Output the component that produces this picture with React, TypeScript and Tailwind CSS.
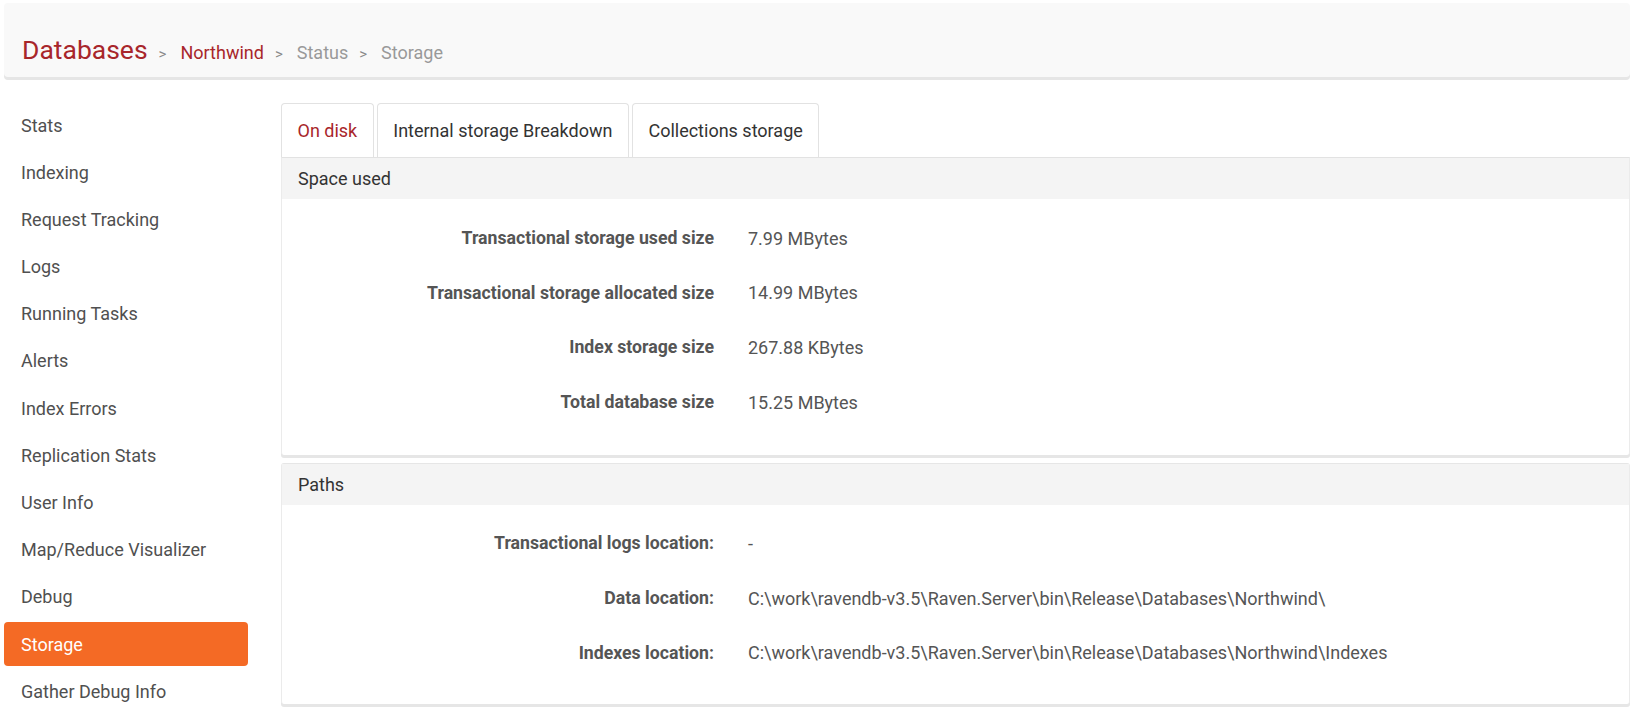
import React from "react";

const menu = [
  "Stats",
  "Indexing",
  "Request Tracking",
  "Logs",
  "Running Tasks",
  "Alerts",
  "Index Errors",
  "Replication Stats",
  "User Info",
  "Map/Reduce Visualizer",
  "Debug",
  "Storage",
  "Gather Debug Info",
];

const spaceUsed = [
  ["Transactional storage used size", "7.99 MBytes"],
  ["Transactional storage allocated size", "14.99 MBytes"],
  ["Index storage size", "267.88 KBytes"],
  ["Total database size", "15.25 MBytes"],
];

const paths = [
  ["Transactional logs location:", "-"],
  ["Data location:", "C:\\work\\ravendb-v3.5\\Raven.Server\\bin\\Release\\Databases\\Northwind\\"],
  ["Indexes location:", "C:\\work\\ravendb-v3.5\\Raven.Server\\bin\\Release\\Databases\\Northwind\\Indexes"],
];

function Sep() {
  return <span className="ml-[11px] mr-[14px] text-[15px] text-[#8a8a8a]">&gt;</span>;
}

function Panel({ title, rows, top }: { title: string; rows: string[][]; top?: boolean }) {
  return (
    <div
      className={`bg-white border-x border-[#ebebeb] rounded-b-[3px] shadow-[0_3px_0_#e6e6e6] ${
        top ? "border-t border-t-[#e2e2e2]" : "border-t border-t-[#e6e6e6] rounded-t-[3px]"
      }`}
    >
      <div className="h-[41px] bg-[#f4f4f4] flex items-center px-[16px] text-[18px] text-[#333]">
        {title}
      </div>
      <div className={top ? "pt-[12px] pb-[26px]" : "pt-[11px] pb-[24px]"}>
        {rows.map(([label, value]) => (
          <div key={label} className="h-[54.6px] flex items-center">
            <div className="w-[432px] text-right font-bold text-[17.7px] text-[#555]">{label}</div>
            <div className="pl-[34px] text-[18px] text-[#555]">{value}</div>
          </div>
        ))}
      </div>
    </div>
  );
}

export default function App() {
  return (
    <div
      className="min-h-screen bg-white px-[4px] pt-[3px]"
      style={{ fontFamily: "Roboto, 'Noto Sans', sans-serif" }}
    >
      <div className="h-[74px] bg-[#f9f9f9] rounded-[4px] shadow-[0_3px_0_#e6e6e6] pl-[18px] pt-[34px]">
        <div className="flex items-baseline leading-none">
          <span className="text-[26.5px] text-[#a8262b]">Databases</span>
          <Sep />
          <span className="text-[18px] text-[#a8262b]">Northwind</span>
          <Sep />
          <span className="text-[18px] text-[#999]">Status</span>
          <Sep />
          <span className="text-[18px] text-[#999]">Storage</span>
        </div>
      </div>

      <div className="flex mt-[26px]">
        <div className="w-[244px] shrink-0">
          {menu.map((item) => (
            <div
              key={item}
              className={`h-[44px] mb-[3.2px] flex items-center pl-[17px] text-[18px] rounded-[4px] ${
                item === "Storage" ? "bg-[#f46a25] text-white" : "text-[#505050]"
              }`}
            >
              {item}
            </div>
          ))}
        </div>

        <div className="flex-1 ml-[33px]">
          <div className="flex">
            {["On disk", "Internal storage Breakdown", "Collections storage"].map((t, i) => (
              <div
                key={t}
                className={`h-[54px] mr-[3px] px-[15.5px] flex items-center border border-b-0 border-[#e2e2e2] rounded-t-[4px] bg-white text-[18px] ${
                  i === 0 ? "text-[#a8262b]" : "text-[#333]"
                }`}
              >
                {t}
              </div>
            ))}
          </div>
          <Panel title="Space used" rows={spaceUsed} top />
          <div className="h-[8px]" />
          <Panel title="Paths" rows={paths} />
        </div>
      </div>
    </div>
  );
}
